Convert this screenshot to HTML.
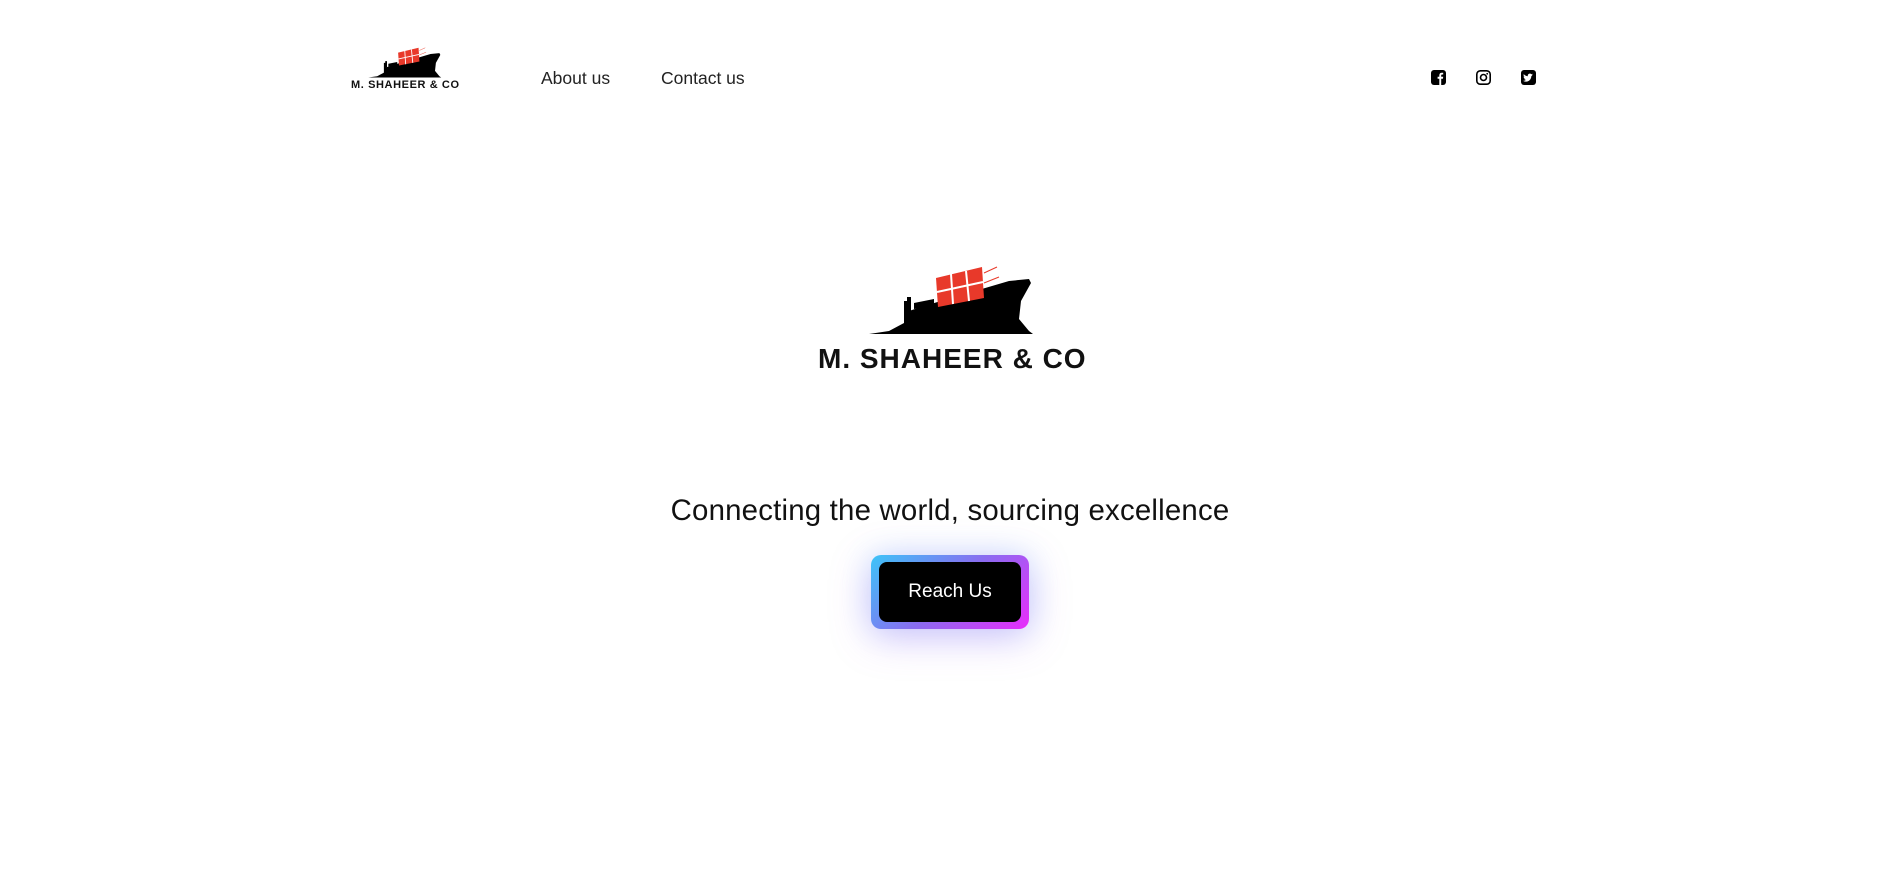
<!DOCTYPE html>
<html><head><meta charset="utf-8"><style>
body{margin:0;width:1900px;height:882px;background:#fff;font-family:"Liberation Sans",sans-serif;position:relative;overflow:hidden}
.a{position:absolute}
.nav{font-size:17.5px;color:#222;top:68px}
h1{position:absolute;margin:0;left:0;width:1900px;text-align:center;top:494px;font-weight:normal;font-size:29.4px;color:#111;letter-spacing:0.2px}
.btn{left:871px;top:555px;width:158px;height:74px;border-radius:10px;background:linear-gradient(135deg,#3cc4f8,#8a6cf0 50%,#e92cfb);box-shadow:0 8px 40px rgba(150,90,240,.35),0 0 30px rgba(60,190,250,.2)}
.btn div{position:absolute;left:8px;top:7px;right:8px;bottom:7px;background:#000;border-radius:8px;color:#fff;font-size:19px;text-align:center;line-height:60px}
.logo-t{font-weight:bold;color:#111;white-space:nowrap}
</style></head><body>
<svg class="a" style="left:351px;top:46px" width="108" height="32" viewBox="870 262 165 72">
<g id="ship"><path d="M870 333 L890 330 L905 322 L905 300 L910 300 L910 310 L925 305 L1010 280 L1030 278 L1032 282 L1022 300 L1020 318 L1030 330 L1034 333 Z" fill="#000"/>
<path d="M908 296 L912 296 L912 310 L908 310Z M915 302 L935 298 L935 306 L915 308Z" fill="#000"/>
<path d="M937 277 L983 266 L985 297 L939 306 Z" fill="#e8392a"/>
<path d="M952 273 L954 303 M967 270 L970 300 M938 291 L984 281" stroke="#fff" stroke-width="2"/>
<path d="M985 272 L998 266 M985 282 L1000 276" stroke="#e8392a" stroke-width="1"/></g>
</svg>
<div class="a logo-t" style="left:351px;top:79px;font-size:11px;letter-spacing:0.6px">M. SHAHEER &amp; CO</div>
<div class="a nav" style="left:541px">About us</div>
<div class="a nav" style="left:661px">Contact us</div>
<svg class="a" style="left:1431px;top:70px" width="15" height="15" viewBox="0 0 15 15"><rect width="15" height="15" rx="3" fill="#000"/><path d="M8.3 15V8.8H6.6V6.8h1.7V5.3c0-1.7 1-2.6 2.5-2.6h1.4v1.8h-1c-.8 0-1 .4-1 1v1.3h2l-.3 2h-1.7V15z" fill="#fff"/></svg>
<svg class="a" style="left:1476px;top:70px" width="15" height="15" viewBox="0 0 15 15"><rect x="0.8" y="0.8" width="13.4" height="13.4" rx="3.5" fill="none" stroke="#000" stroke-width="1.6"/><circle cx="7.5" cy="7.5" r="3" fill="none" stroke="#000" stroke-width="1.6"/><circle cx="11.2" cy="3.8" r=".9" fill="#000"/></svg>
<svg class="a" style="left:1521px;top:70px" width="15" height="15" viewBox="0 0 15 15"><rect width="15" height="15" rx="3" fill="#000"/><path d="M12 4.6c-.4.2-.8.3-1.2.3.4-.3.8-.7.9-1.1-.4.2-.9.4-1.3.5-.8-.9-2.3-.9-3.1 0-.5.5-.7 1.2-.5 1.9C5.1 6.1 3.7 5.3 2.8 4.1c-.5.9-.2 2.1.7 2.7-.3 0-.7-.1-1-.3 0 1 .7 1.8 1.6 2-.3.1-.7.1-1 0 .3.8 1 1.4 1.9 1.4-.9.7-2 1.1-3.2.9 3 1.9 7.1.6 8.3-3.1.1-.5.2-1 .2-1.5.4-.3.7-.6.9-1z" fill="#fff"/></svg>
<svg class="a" style="left:869px;top:263px" width="165" height="72" viewBox="870 262 165 72"><use href="#ship"/></svg>
<div class="a logo-t" style="left:818px;top:343px;font-size:28px;letter-spacing:1px">M. SHAHEER &amp; CO</div>
<h1>Connecting the world, sourcing excellence</h1>
<div class="a btn"><div>Reach Us</div></div>
</body></html>
